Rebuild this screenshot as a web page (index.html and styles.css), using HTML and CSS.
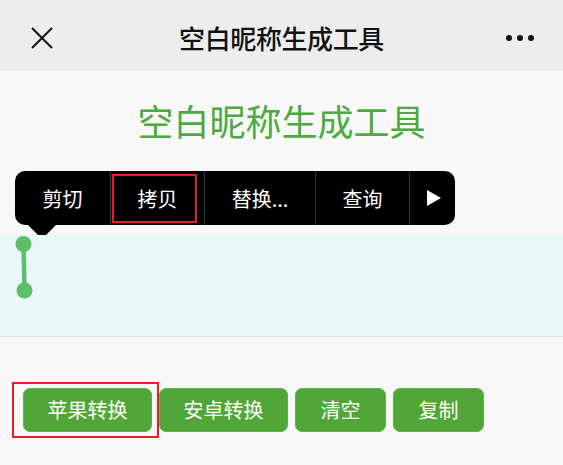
FILE: index.html
```html
<!DOCTYPE html>
<html lang="zh-CN">
<head>
<meta charset="utf-8">
<title>空白昵称生成工具</title>
<link rel="stylesheet" href="styles.css">
</head>
<body>
<header class="topbar">
  <div class="topbar-left">
    <svg class="icon-close" width="22" height="22" viewBox="0 0 22 22"><path d="M1 1 L21 21 M21 1 L1 21" stroke="#111" stroke-width="2" fill="none"/></svg>
  </div>
  <div class="topbar-title">空白昵称生成工具</div>
  <div class="topbar-right">
    <span class="dot"></span><span class="dot"></span><span class="dot"></span>
  </div>
</header>
<main class="page">
  <h1 class="page-title">空白昵称生成工具</h1>
  <div class="menu">
    <div class="menu-item w1">剪切</div>
    <div class="menu-item w2 marked">拷贝</div>
    <div class="menu-item w3">替换...</div>
    <div class="menu-item w4">查询</div>
    <div class="menu-item w5"><span class="tri"></span></div>
  </div>
  <div class="textarea">
    <svg class="handle" width="20" height="66" viewBox="0 0 20 66"><line x1="9.5" y1="9" x2="10.5" y2="55" stroke="#5cc06a" stroke-width="4.5"/><circle cx="9.5" cy="9" r="8" fill="#5cc06a"/><circle cx="10.5" cy="55.5" r="8" fill="#5cc06a"/></svg>
  </div>
  <div class="actions">
    <button class="btn marked-btn">苹果转换</button>
    <button class="btn">安卓转换</button>
    <button class="btn btn-short">清空</button>
    <button class="btn btn-short">复制</button>
  </div>
</main>
</body>
</html>
```

FILE: styles.css
```css
html, body {
  margin: 0;
  padding: 0;
}
body {
  background: #f8f8f8;
  font-family: "Noto Sans CJK SC", "Noto Sans", sans-serif;
  width: 563px;
  height: 465px;
  overflow: hidden;
}
.topbar {
  height: 71px;
  box-sizing: border-box;
  padding-top: 4px;
  background: #ededed;
  display: grid;
  grid-template-columns: 1fr auto 1fr;
  align-items: center;
}
.topbar-left {
  padding-left: 31px;
  display: flex;
  align-items: center;
}
.icon-close {
  display: block;
}
.topbar-title {
  font-size: 26px;
  line-height: 30px;
  font-weight: 500;
  color: #111;
  letter-spacing: -0.4px;
}
.topbar-right {
  display: flex;
  justify-content: flex-end;
  gap: 5px;
  padding-right: 29px;
}
.dot {
  width: 6px;
  height: 6px;
  border-radius: 50%;
  background: #111;
}
.page {
  display: flex;
  flex-direction: column;
}
.page-title {
  margin: 0;
  padding-top: 31px;
  font-size: 36px;
  line-height: 36px;
  font-weight: normal;
  color: #4caa3f;
  text-align: center;
}
.menu {
  margin: 33px 0 0 15px;
  width: 440px;
  height: 54px;
  background: #000;
  border-radius: 10px;
  display: flex;
  position: relative;
}
.menu::after {
  content: "";
  position: absolute;
  left: 13px;
  top: 54px;
  border-left: 14px solid transparent;
  border-right: 14px solid transparent;
  border-top: 14px solid #000;
}
.menu-item {
  height: 54px;
  display: flex;
  align-items: center;
  justify-content: center;
  color: #fff;
  font-size: 20px;
  box-sizing: border-box;
  position: relative;
}
.menu-item + .menu-item {
  border-left: 1px solid #333;
}
.w1 { width: 95px; }
.w2 { width: 94px; }
.w3 { width: 111px; }
.w4 { width: 94px; }
.w5 { width: 46px; }
.marked::after {
  content: "";
  position: absolute;
  left: 1px;
  top: 3px;
  width: 85px;
  height: 49px;
  box-sizing: border-box;
  border: 2px solid #ec1c24;
}
.tri {
  width: 0;
  height: 0;
  border-top: 8px solid transparent;
  border-bottom: 8px solid transparent;
  border-left: 14px solid #fff;
  margin-left: 3px;
}
.textarea {
  margin-top: 10px;
  height: 101px;
  background: #ebf8f8;
  border-bottom: 1px solid #d6e4e6;
  position: relative;
}
.handle {
  position: absolute;
  left: 14px;
  top: 0;
}
.actions {
  margin: 51px 0 0 23px;
  display: flex;
  gap: 7px;
}
.btn {
  height: 44px;
  padding: 0 23.5px;
  background: #50a737;
  border: 1px solid #62b24c;
  border-radius: 7px;
  color: #fff;
  font-family: "Noto Sans CJK SC", sans-serif;
  font-size: 20px;
  line-height: 1;
  position: relative;
}
.btn-short {
  padding: 0 24.5px;
}
.marked-btn::after {
  content: "";
  position: absolute;
  left: -12px;
  top: -7px;
  right: -8px;
  bottom: -7px;
  border: 2px solid #ec1c24;
}
```
